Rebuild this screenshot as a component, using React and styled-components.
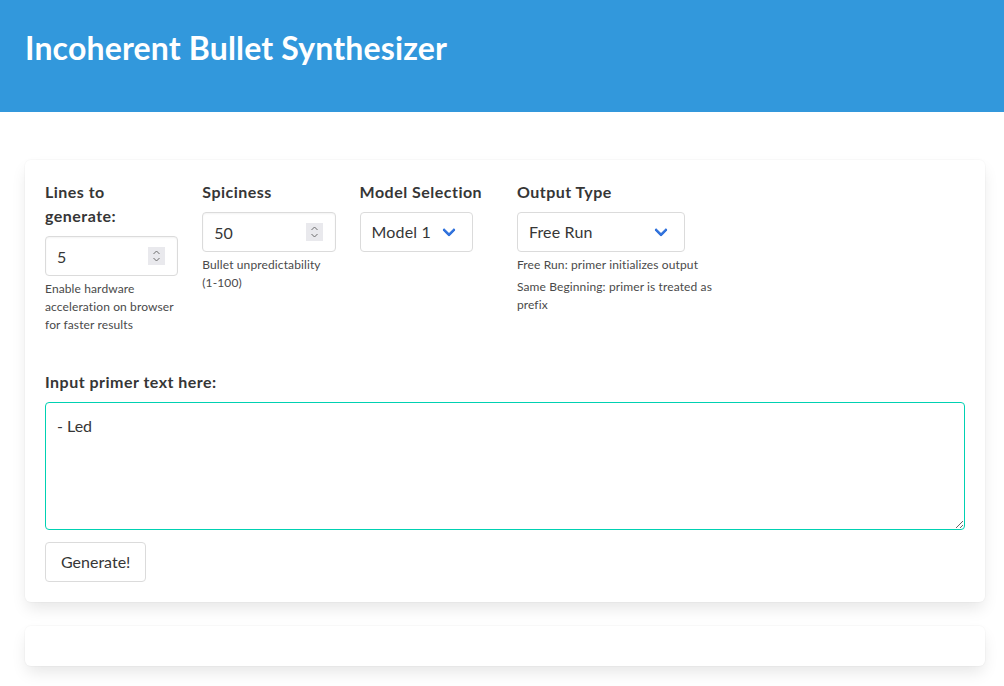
import React, {useState} from 'react'
import styled, {createGlobalStyle} from 'styled-components'

const GlobalStyle = createGlobalStyle`
  body {
    margin: 0;
    background: #fff;
    font-family: Lato, "Open Sans", sans-serif;
    font-size: 16px;
    line-height: 1.5;
    color: #4a4a4a;
  }
  * { box-sizing: border-box; }
`

const Hero = styled.header`
  background: #3298dc;
  height: 112px;
  padding: 30px 25px 0;
`
const Title = styled.h1`
  margin: 0;
  color: #fff;
  font-size: 32px;
  font-weight: 700;
  line-height: 36px;
  letter-spacing: 0.005em;
`
const Section = styled.main`
  padding: 48px 19px 24px 25px;
`
const Box = styled.div`
  background: #fff;
  border-radius: 6px;
  padding: 20px;
  box-shadow: 0 0.5em 1em -0.125em rgba(10, 10, 10, 0.1), 0 0 0 1px rgba(10, 10, 10, 0.02);
  & + & {
    margin-top: 24px;
  }
`
const Empty = styled(Box)`
  height: 40px;
`
const Columns = styled.div`
  display: grid;
  grid-template-columns: 133.3px 133.3px 133.3px 212px;
  column-gap: 24px;
  align-items: start;
  margin-bottom: 36px;
`
const Label = styled.label`
  display: block;
  color: #363636;
  font-weight: 700;
  font-size: 16px;
  line-height: 24px;
  letter-spacing: 0.03em;
  margin-bottom: 8px;
`
const Control = styled.div`
  position: relative;
`
const Input = styled.input`
  display: block;
  width: 100%;
  height: 40px;
  padding: 0 11px;
  border: 1px solid #dbdbdb;
  border-radius: 4px;
  font: inherit;
  color: #363636;
  background: #fff;
  box-shadow: inset 0 0.0625em 0.125em rgba(10, 10, 10, 0.05);
  outline: none;
`
const Spinner = styled.span`
  position: absolute;
  right: 13px;
  top: 11px;
  width: 17px;
  height: 18px;
  background: #e9e9ed;
  display: flex;
  align-items: center;
  justify-content: center;
`
const SelectWrap = styled.div`
  position: relative;
  display: inline-block;
  &::after {
    content: "";
    position: absolute;
    right: 19px;
    top: 50%;
    margin-top: -7px;
    width: 7px;
    height: 7px;
    border: 3px solid #3273dc;
    border-radius: 2px;
    border-right: 0;
    border-top: 0;
    transform: rotate(-45deg);
    pointer-events: none;
  }
`
const Select = styled.select`
  appearance: none;
  height: 40px;
  padding: 0 40px 0 11px;
  border: 1px solid #dbdbdb;
  border-radius: 4px;
  background: #fff;
  font: inherit;
  color: #363636;
  letter-spacing: 0.01em;
  outline: none;
`
const Help = styled.p`
  margin: 4px 0 0;
  font-size: 12px;
  line-height: 18px;
  letter-spacing: 0.01em;
  color: #4a4a4a;
`
const TextArea = styled.textarea`
  display: block;
  width: 100%;
  height: 128px;
  padding: 11px;
  border: 1px solid #00d1b2;
  border-radius: 4px;
  font: inherit;
  line-height: 1.5;
  color: #363636;
  resize: vertical;
  outline: none;
  margin-bottom: 12px;
`
const Button = styled.button`
  height: 40px;
  padding: 0 15px;
  border: 1px solid #dbdbdb;
  border-radius: 4px;
  background: #fff;
  color: #363636;
  font: inherit;
  cursor: pointer;
`

const SpinIcon = () => (
    <Spinner>
        <svg width="9" height="14" viewBox="0 0 9 14" fill="none" stroke="#6d6d6d" strokeWidth="1">
            <path d="M1.5 5 L4.5 2 L7.5 5"/>
            <path d="M1.5 9 L4.5 12 L7.5 9"/>
        </svg>
    </Spinner>
)

const NumberField = ({value, onChange}) => (
    <Control>
        <Input type="text" inputMode="numeric" value={value} onChange={e => onChange(e.target.value)}/>
        <SpinIcon/>
    </Control>
)

export default function App() {
    const [lines, setLines] = useState('5')
    const [spice, setSpice] = useState('50')
    const [primer, setPrimer] = useState('- Led')

    return (
        <>
            <GlobalStyle/>
            <Hero>
                <Title>Incoherent Bullet Synthesizer</Title>
            </Hero>
            <Section>
                <Box>
                    <Columns>
                        <div>
                            <Label>Lines to generate:</Label>
                            <NumberField value={lines} onChange={setLines}/>
                            <Help>Enable hardware acceleration on browser for faster results</Help>
                        </div>
                        <div>
                            <Label>Spiciness</Label>
                            <NumberField value={spice} onChange={setSpice}/>
                            <Help>Bullet unpredictability (1-100)</Help>
                        </div>
                        <div>
                            <Label>Model Selection</Label>
                            <SelectWrap>
                                <Select defaultValue="1">
                                    <option value="1">Model 1</option>
                                    <option value="2">Model 2</option>
                                </Select>
                            </SelectWrap>
                        </div>
                        <div>
                            <Label>Output Type</Label>
                            <SelectWrap>
                                <Select defaultValue="free">
                                    <option value="free">Free Run</option>
                                    <option value="same">Same Beginning</option>
                                </Select>
                            </SelectWrap>
                            <Help>Free Run: primer initializes output</Help>
                            <Help>Same Beginning: primer is treated as prefix</Help>
                        </div>
                    </Columns>
                    <Label>Input primer text here:</Label>
                    <TextArea value={primer} onChange={e => setPrimer(e.target.value)}/>
                    <Button>Generate!</Button>
                </Box>
                <Empty/>
            </Section>
        </>
    )
}
